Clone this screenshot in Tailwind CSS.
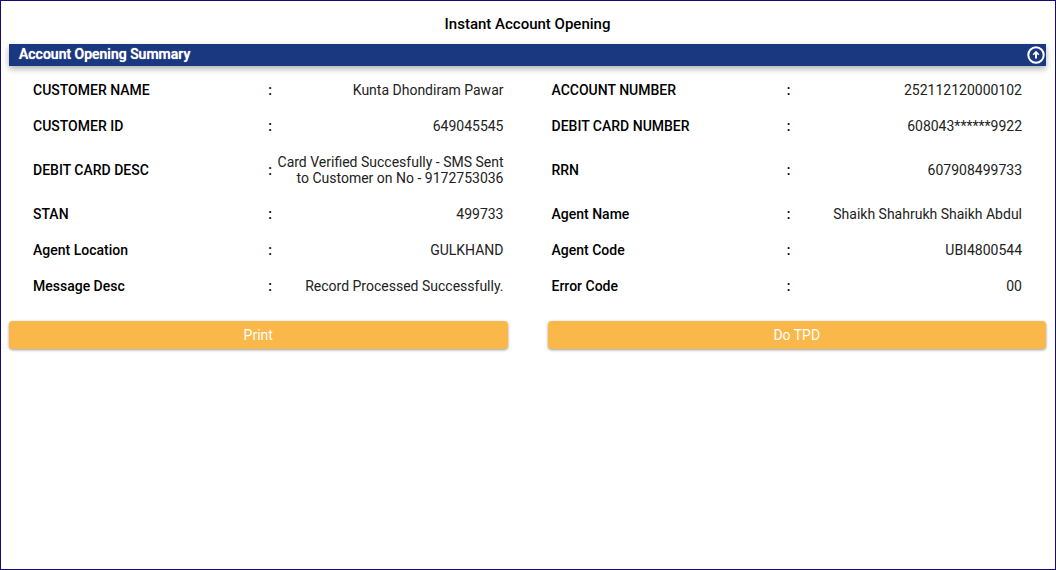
<!DOCTYPE html>
<html lang="en">
<head>
    <meta charset="UTF-8">
    <meta name="viewport" content="width=device-width, initial-scale=1.0">
    <title>Instant Account Opening</title>
    <script src="https://cdn.jsdelivr.net/npm/@tailwindcss/browser@4"></script>
</head>
<body class="min-h-screen border border-[#140c78] bg-white pl-2 pr-[9px] font-['Roboto',sans-serif] text-sm/4 text-black">
    <h1 class="pt-[13px] pb-[10px] text-center text-[15px]/5 font-medium">Instant Account Opening</h1>

    <!-- Summary header -->
    <div class="flex h-[22px] items-center justify-between bg-[#1a3880] pl-[10px] pr-px text-white shadow-[0_3px_6px_rgba(0,0,0,0.3)]">
        <h2 class="pb-[2px] font-medium [text-shadow:0_0_1px_#ffffff]">Account Opening Summary</h2>
        <button type="button" aria-label="Collapse summary" class="cursor-pointer">
            <svg class="size-[18px]" viewBox="0 0 18 18" fill="none" stroke="currentColor" stroke-width="2">
                <circle cx="9" cy="9" r="7.7"/>
                <path d="M9 12.4V6.8"/>
                <path d="M6.2 8.8 9 6l2.8 2.8" stroke-width="1.6"/>
            </svg>
        </button>
    </div>

    <!-- Account details -->
    <dl class="grid grid-cols-2 pt-[6px]">
        <div class="flex items-center px-6 py-[10px]">
            <dt class="w-1/2 font-medium">CUSTOMER NAME</dt>
            <dd class="flex w-1/2 items-center justify-between gap-1"><span class="font-medium">:</span><span class="text-right text-[#222222]">Kunta Dhondiram Pawar</span></dd>
        </div>
        <div class="flex items-center px-6 py-[10px]">
            <dt class="w-1/2 font-medium">ACCOUNT NUMBER</dt>
            <dd class="flex w-1/2 items-center justify-between gap-1"><span class="font-medium">:</span><span class="text-right text-[#222222]">252112120000102</span></dd>
        </div>
        <div class="flex items-center px-6 py-[10px]">
            <dt class="w-1/2 font-medium">CUSTOMER ID</dt>
            <dd class="flex w-1/2 items-center justify-between gap-1"><span class="font-medium">:</span><span class="text-right text-[#222222]">649045545</span></dd>
        </div>
        <div class="flex items-center px-6 py-[10px]">
            <dt class="w-1/2 font-medium">DEBIT CARD NUMBER</dt>
            <dd class="flex w-1/2 items-center justify-between gap-1"><span class="font-medium">:</span><span class="text-right text-[#222222]">608043******9922</span></dd>
        </div>
        <div class="flex items-center px-6 py-[10px]">
            <dt class="w-1/2 font-medium">DEBIT CARD DESC</dt>
            <dd class="flex w-1/2 items-center justify-between gap-1"><span class="font-medium">:</span><span class="text-right text-[#222222]">Card Verified Succesfully - SMS Sent to Customer on No - 9172753036</span></dd>
        </div>
        <div class="flex items-center px-6 py-[10px]">
            <dt class="w-1/2 font-medium">RRN</dt>
            <dd class="flex w-1/2 items-center justify-between gap-1"><span class="font-medium">:</span><span class="text-right text-[#222222]">607908499733</span></dd>
        </div>
        <div class="flex items-center px-6 py-[10px]">
            <dt class="w-1/2 font-medium">STAN</dt>
            <dd class="flex w-1/2 items-center justify-between gap-1"><span class="font-medium">:</span><span class="text-right text-[#222222]">499733</span></dd>
        </div>
        <div class="flex items-center px-6 py-[10px]">
            <dt class="w-1/2 font-medium">Agent Name</dt>
            <dd class="flex w-1/2 items-center justify-between gap-1"><span class="font-medium">:</span><span class="text-right text-[#222222]">Shaikh Shahrukh Shaikh Abdul</span></dd>
        </div>
        <div class="flex items-center px-6 py-[10px]">
            <dt class="w-1/2 font-medium">Agent Location</dt>
            <dd class="flex w-1/2 items-center justify-between gap-1"><span class="font-medium">:</span><span class="text-right text-[#222222]">GULKHAND</span></dd>
        </div>
        <div class="flex items-center px-6 py-[10px]">
            <dt class="w-1/2 font-medium">Agent Code</dt>
            <dd class="flex w-1/2 items-center justify-between gap-1"><span class="font-medium">:</span><span class="text-right text-[#222222]">UBI4800544</span></dd>
        </div>
        <div class="flex items-center px-6 py-[10px]">
            <dt class="w-1/2 font-medium">Message Desc</dt>
            <dd class="flex w-1/2 items-center justify-between gap-1"><span class="font-medium">:</span><span class="text-right text-[#222222]">Record Processed Successfully.</span></dd>
        </div>
        <div class="flex items-center px-6 py-[10px]">
            <dt class="w-1/2 font-medium">Error Code</dt>
            <dd class="flex w-1/2 items-center justify-between gap-1"><span class="font-medium">:</span><span class="text-right text-[#222222]">00</span></dd>
        </div>
    </dl>

    <!-- Actions -->
    <div class="grid grid-cols-2 gap-10 pt-[17px]">
        <button type="button" class="h-7 cursor-pointer rounded-[4px] bg-[#fbb84a] text-white shadow-[0_1px_3px_rgba(0,0,0,0.4)] hover:bg-[#f5ad38]">Print</button>
        <button type="button" class="h-7 cursor-pointer rounded-[4px] bg-[#fbb84a] text-white shadow-[0_1px_3px_rgba(0,0,0,0.4)] hover:bg-[#f5ad38]">Do TPD</button>
    </div>
</body>
</html>
